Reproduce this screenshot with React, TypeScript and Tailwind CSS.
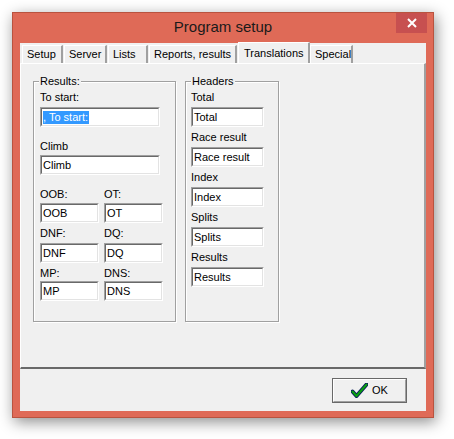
import React from 'react';

const FONT = { fontFamily: '"Liberation Sans", Arial, sans-serif' };

// Classic sunken edit box: dark top/left, light bottom/right.
const Edit: React.FC<{ value: string; width: string; selected?: boolean }> = ({ value, width, selected }) => (
  <div className={`${width} h-[20px] border border-t-[#a0a0a0] border-l-[#a0a0a0] border-b-white border-r-white`}>
    <div className="h-full bg-white border border-t-[#696969] border-l-[#696969] border-b-[#e3e3e3] border-r-[#e3e3e3] flex items-center pl-px text-[11px] leading-[13px] text-black">
      {selected ? <span className="bg-[#3399ff] text-white pr-px">{value}</span> : value}
    </div>
  </div>
);

const Label: React.FC<{ children: React.ReactNode; className?: string }> = ({ children, className = '' }) => (
  <div className={`text-[11px] leading-[13px] text-black ${className}`}>{children}</div>
);

// Etched group box with its caption sitting on the top line.
const Group: React.FC<{ title: string; className: string; children: React.ReactNode }> = ({ title, className, children }) => (
  <div className={`relative border border-[#a0a0a0] shadow-[inset_1px_1px_0_#fff,1px_1px_0_#fff] ${className}`}>
    <span className="absolute left-[5px] -top-[7px] bg-[#f0f0f0] px-px text-[11px] leading-[13px] text-black">{title}</span>
    {children}
  </div>
);

const tabs = [
  { label: 'Setup', w: 'w-[41px]' },
  { label: 'Server', w: 'w-[43px]' },
  { label: 'Lists', w: 'w-[40px]' },
  { label: 'Reports, results', w: 'w-[88px]' },
];

const Tab: React.FC<{ label: string; w: string }> = ({ label, w }) => (
  <div className={`${w} h-[18px] mt-[2px] mr-px border-l border-t border-l-white border-t-white border-r-2 border-r-[#a0a0a0] pl-[4px] flex items-center text-[11px] text-black`}>
    {label}
  </div>
);

export default function App() {
  return (
    <div className="w-[454px] h-[439px] bg-white pl-[12px] pt-[12px]" style={FONT}>
      <div className="w-[422px] h-[406px] bg-[#df6a57] border border-[#b9533f] shadow-[2px_4px_14px_rgba(0,0,0,0.45)] flex flex-col">
        {/* title bar */}
        <div className="h-[30px] relative flex items-center justify-center">
          <span className="text-[15px] text-[#1a1a1a] mt-[-2px]">Program setup</span>
          <div className="absolute right-[6px] top-0 w-[31px] h-[20px] bg-[#c75050] flex items-center justify-center">
            <svg width="10" height="10" viewBox="0 0 10 10">
              <path d="M1 1 L9 9 M9 1 L1 9" stroke="#fff" strokeWidth="2" />
            </svg>
          </div>
        </div>
        {/* client */}
        <div className="mx-[7px] w-[406px] h-[368px] bg-[#f0f0f0] flex flex-col">
          {/* tabs */}
          <div className="h-[20px] flex pl-[2px] relative z-10">
            {tabs.map(t => <Tab key={t.label} label={t.label} w={t.w} />)}
            <div className="w-[72px] h-[21px] -mt-px bg-[#f0f0f0] border-l border-t border-l-white border-t-white border-r-2 border-r-[#a0a0a0] pl-[5px] flex items-center text-[11px] text-black">
              Translations
            </div>
            <Tab label="Special" w="w-[43px]" />
          </div>
          {/* tab page */}
          <div className="h-[306px] border-t border-l border-t-white border-l-white border-r-2 border-b-2 border-r-[#a0a0a0] border-b-[#696969] flex items-start pl-[12px] pt-[17px] gap-[9px]">
            <Group title="Results:" className="w-[143px] h-[241px] pl-[6px] pt-[9px]">
              <Label>To start:</Label>
              <div className="mt-[3px]"><Edit value=", To start:" width="w-[120px]" selected /></div>
              <Label className="mt-[13px]">Climb</Label>
              <div className="mt-[2px]"><Edit value="Climb" width="w-[120px]" /></div>
              <div className="flex gap-[5px]">
                <div className="flex flex-col">
                  <Label className="mt-[13px]">OOB:</Label>
                  <div className="mt-[2px]"><Edit value="OOB" width="w-[59px]" /></div>
                  <Label className="mt-[4px]">DNF:</Label>
                  <div className="mt-[3px]"><Edit value="DNF" width="w-[59px]" /></div>
                  <Label className="mt-[4px]">MP:</Label>
                  <div className="mt-px"><Edit value="MP" width="w-[59px]" /></div>
                </div>
                <div className="flex flex-col">
                  <Label className="mt-[13px]">OT:</Label>
                  <div className="mt-[2px]"><Edit value="OT" width="w-[59px]" /></div>
                  <Label className="mt-[4px]">DQ:</Label>
                  <div className="mt-[3px]"><Edit value="DQ" width="w-[59px]" /></div>
                  <Label className="mt-[4px]">DNS:</Label>
                  <div className="mt-px"><Edit value="DNS" width="w-[59px]" /></div>
                </div>
              </div>
            </Group>
            <Group title="Headers" className="w-[94px] h-[241px] pl-[5px] pt-[9px]">
              <Label>Total</Label>
              <div className="mt-[3px]"><Edit value="Total" width="w-[73px]" /></div>
              <Label className="mt-[4px]">Race result</Label>
              <div className="mt-[3px]"><Edit value="Race result" width="w-[73px]" /></div>
              <Label className="mt-[4px]">Index</Label>
              <div className="mt-[3px]"><Edit value="Index" width="w-[73px]" /></div>
              <Label className="mt-[4px]">Splits</Label>
              <div className="mt-[3px]"><Edit value="Splits" width="w-[73px]" /></div>
              <Label className="mt-[4px]">Results</Label>
              <div className="mt-[3px]"><Edit value="Results" width="w-[73px]" /></div>
            </Group>
          </div>
          {/* button bar */}
          <div className="flex-1 flex justify-end items-start pt-[9px] pr-[19px]">
            <div className="w-[75px] h-[25px] border border-[#696969] bg-[#f0f0f0]">
              <div className="h-full border border-t-white border-l-white border-b-[#a0a0a0] border-r-[#a0a0a0] flex items-center justify-center gap-[4px] text-[11px] text-black">
                <svg width="17" height="15" viewBox="0 0 17 15">
                  <path d="M1.5 8.5 L5.5 13 L15.5 1.5" fill="none" stroke="#0a1d5c" strokeWidth="4" strokeLinejoin="round" strokeLinecap="round" />
                  <path d="M1.5 8.5 L5.5 13 L15.5 1.5" fill="none" stroke="#0aa010" strokeWidth="2" strokeLinejoin="round" strokeLinecap="round" />
                </svg>
                <span>OK</span>
              </div>
            </div>
          </div>
        </div>
      </div>
    </div>
  );
}
